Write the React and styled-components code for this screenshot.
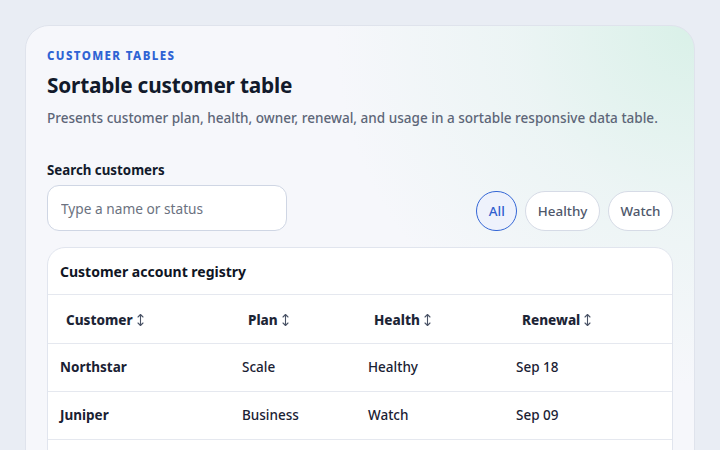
import React, { useMemo, useState } from 'react'
import styled, { createGlobalStyle } from 'styled-components'

const GlobalStyle = createGlobalStyle`
    * {
        box-sizing: border-box;
    }
    body {
        margin: 0;
        background: #e9edf4;
        font-family: 'Noto Sans', 'Open Sans', sans-serif;
        color: #111827;
    }
`

const Page = styled.div`
    padding: 25px 25px 0 25px;
    height: 450px;
    overflow: hidden;
`

const Card = styled.section`
    background: radial-gradient(
            circle at 100% 0%,
            rgba(214, 240, 230, 0.9) 0,
            rgba(226, 242, 238, 0.5) 180px,
            rgba(246, 247, 251, 0) 360px
        ),
        #f6f7fb;
    border: 1px solid #dfe3ec;
    border-radius: 24px;
    padding: 22px 21px 0 21px;
    min-height: 460px;
`

const Eyebrow = styled.div`
    font-size: 11.5px;
    font-weight: 800;
    letter-spacing: 1.4px;
    color: #2f63d4;
    line-height: 16px;
`

const Title = styled.h1`
    margin: 6px 0 0 0;
    font-size: 20.8px;
    font-weight: 700;
    letter-spacing: -0.2px;
    line-height: 30px;
    color: #121a2b;
`

const Subtitle = styled.p`
    margin: 8px 0 0 0;
    font-size: 13.55px;
    font-weight: 500;
    color: #5d6678;
    line-height: 20px;
`

const Controls = styled.div`
    display: flex;
    justify-content: space-between;
    align-items: flex-end;
    margin-top: 33px;
`

const Field = styled.label`
    display: flex;
    flex-direction: column;
    gap: 6px;
`

const FieldLabel = styled.span`
    font-size: 13.3px;
    font-weight: 700;
    color: #121a2b;
    line-height: 18px;
`

const SearchInput = styled.input`
    width: 240px;
    height: 46px;
    border: 1px solid #cfd6e4;
    border-radius: 12px;
    background: #ffffff;
    padding: 0 13px;
    font-family: inherit;
    font-size: 13.7px;
    color: #111827;
    outline: none;

    &::placeholder {
        color: #6b7280;
    }
`

const ChipRow = styled.div`
    display: flex;
    gap: 8px;
`

const Chip = styled.button`
    height: 40px;
    padding: 0 11.5px;
    border-radius: 999px;
    font-family: inherit;
    font-size: 13.4px;
    font-weight: 500;
    cursor: pointer;
    border: 1px solid ${(p) => (p.$active ? '#3567d6' : '#d6dbe6')};
    background: ${(p) => (p.$active ? '#eef2fc' : '#ffffff')};
    color: ${(p) => (p.$active ? '#2f5fcf' : '#4f586b')};
`

const TablePanel = styled.div`
    margin-top: 16px;
    min-height: 220px;
    background: #ffffff;
    border: 1px solid #e1e5ee;
    border-radius: 18px;
    overflow: hidden;
`

const Caption = styled.div`
    height: 47px;
    display: flex;
    align-items: center;
    padding: 0 12px;
    font-size: 14px;
    font-weight: 700;
    color: #0f1524;
    border-bottom: 1px solid #e5e8ef;
`

const Table = styled.table`
    width: 100%;
    border-collapse: collapse;
    table-layout: fixed;
`

const Th = styled.th`
    height: 48px;
    padding: 0 12px;
    text-align: left;
    width: ${(p) => p.$width}px;
    border-bottom: 1px solid #e5e8ef;
`

const SortButton = styled.button`
    border: none;
    background: none;
    padding: 0 6px;
    font-family: inherit;
    font-size: 13.5px;
    font-weight: 800;
    color: #1d2536;
    cursor: pointer;
    display: inline-flex;
    align-items: center;
    gap: 4px;
`

const SortGlyph = styled.svg`
    width: 7px;
    height: 14px;
    display: block;
`

const Td = styled.td`
    height: 48px;
    padding: 0 12px;
    font-size: 13.5px;
    font-weight: ${(p) => (p.$strong ? 700 : 500)};
    color: #1a2133;
    border-bottom: 1px solid #e5e8ef;
    white-space: nowrap;
`

const columns = [
    { key: 'name', label: 'Customer', width: 182 },
    { key: 'plan', label: 'Plan', width: 126 },
    { key: 'health', label: 'Health', width: 148 },
    { key: 'renewal', label: 'Renewal', width: 168 },
]

const customers = [
    { name: 'Northstar', plan: 'Scale', health: 'Healthy', renewal: 'Sep 18' },
    { name: 'Juniper', plan: 'Business', health: 'Watch', renewal: 'Sep 09' },
]

const filters = ['All', 'Healthy', 'Watch']

const SortIcon = () => (
    <SortGlyph viewBox="0 0 7 14" aria-hidden="true">
        <path
            d="M3.5 1.5v11M1 4l2.5-2.5L6 4M1 10l2.5 2.5L6 10"
            fill="none"
            stroke="#4a5366"
            strokeWidth="1.1"
            strokeLinecap="round"
            strokeLinejoin="round"
        />
    </SortGlyph>
)

const App = () => {
    const [query, setQuery] = useState('')
    const [filter, setFilter] = useState('All')
    const [sort, setSort] = useState(null)

    const rows = useMemo(() => {
        const q = query.toLowerCase()
        let list = customers.filter(
            (c) =>
                (filter === 'All' || c.health === filter) &&
                (c.name.toLowerCase().includes(q) ||
                    c.health.toLowerCase().includes(q))
        )
        if (sort) {
            list = [...list].sort((a, b) => a[sort].localeCompare(b[sort]))
        }
        return list
    }, [query, filter, sort])

    return (
        <Page>
            <GlobalStyle />
            <Card>
                <Eyebrow>CUSTOMER TABLES</Eyebrow>
                <Title>Sortable customer table</Title>
                <Subtitle>
                    Presents customer plan, health, owner, renewal, and usage
                    in a sortable responsive data table.
                </Subtitle>
                <Controls>
                    <Field>
                        <FieldLabel>Search customers</FieldLabel>
                        <SearchInput
                            placeholder="Type a name or status"
                            value={query}
                            onChange={(e) => setQuery(e.target.value)}
                        />
                    </Field>
                    <ChipRow>
                        {filters.map((f) => (
                            <Chip
                                key={f}
                                $active={filter === f}
                                onClick={() => setFilter(f)}
                            >
                                {f}
                            </Chip>
                        ))}
                    </ChipRow>
                </Controls>
                <TablePanel>
                    <Caption>Customer account registry</Caption>
                    <Table>
                        <thead>
                            <tr>
                                {columns.map((col) => (
                                    <Th key={col.key} $width={col.width}>
                                        <SortButton
                                            onClick={() => setSort(col.key)}
                                        >
                                            {col.label}
                                            <SortIcon />
                                        </SortButton>
                                    </Th>
                                ))}
                            </tr>
                        </thead>
                        <tbody>
                            {rows.map((row) => (
                                <tr key={row.name}>
                                    <Td $strong>{row.name}</Td>
                                    <Td>{row.plan}</Td>
                                    <Td>{row.health}</Td>
                                    <Td>{row.renewal}</Td>
                                </tr>
                            ))}
                        </tbody>
                    </Table>
                </TablePanel>
            </Card>
        </Page>
    )
}

export default App
